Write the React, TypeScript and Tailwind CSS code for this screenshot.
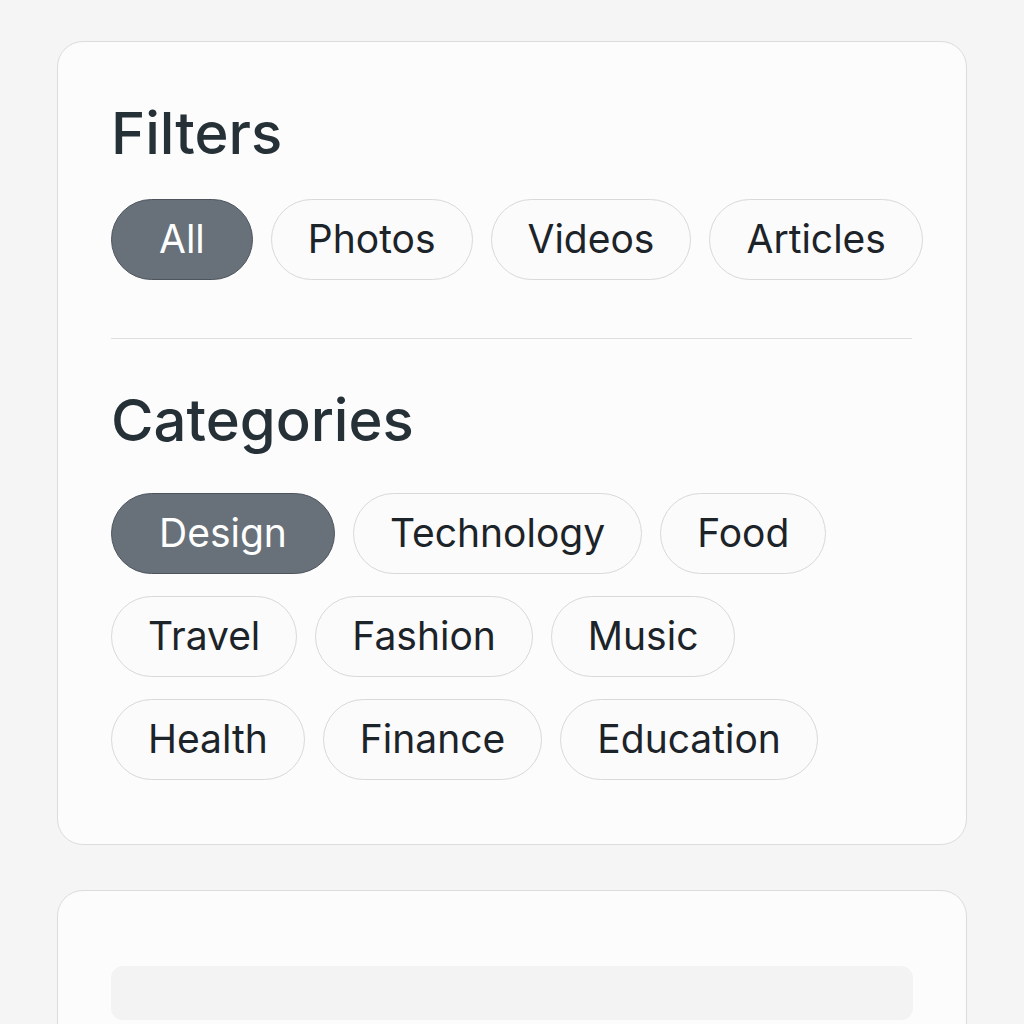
import React from 'react';

const filters = ['All', 'Photos', 'Videos', 'Articles'];
const categories = ['Design', 'Technology', 'Food', 'Travel', 'Fashion', 'Music', 'Health', 'Finance', 'Education'];

function Chip({ label, active }: { label: string; active?: boolean }) {
  return (
    <button
      className={
        active
          ? 'h-[81px] px-[47px] rounded-full flex items-center bg-[#68717a] border border-[#4d545c] text-white text-[39px]'
          : 'h-[81px] px-[36px] rounded-full flex items-center bg-[#fbfbfb] border border-[#d9d9d9] text-[#1c2329] text-[39px]'
      }
    >
      {label}
    </button>
  );
}

export default function App() {
  return (
    <div className="min-h-screen bg-[#f5f5f5] px-[57px] pt-[41px] font-['Inter',sans-serif]">
      <div className="bg-[#fcfcfc] border border-[#dcdcdc] rounded-[26px] px-[53px] pt-[56px] pb-[64px]">
        <h2 className="text-[58px] leading-[70px] font-medium text-[#263037]">Filters</h2>
        <div className="flex gap-[18px] mt-[31px]">
          {filters.map((f, i) => (
            <Chip key={f} label={f} active={i === 0} />
          ))}
        </div>
        <div className="h-px bg-[#dedede] mt-[58px] mr-[1px]" />
        <h2 className="text-[58px] leading-[70px] font-medium text-[#263037] mt-[46px]">Categories</h2>
        <div className="flex flex-wrap gap-x-[18px] gap-y-[22px] mt-[38px]">
          {categories.map((c, i) => (
            <Chip key={c} label={c} active={i === 0} />
          ))}
        </div>
      </div>
      <div className="mt-[45px] bg-[#fcfcfc] border border-[#dcdcdc] rounded-[26px] px-[53px] pt-[75px] pb-[40px]">
        <div className="h-[54px] rounded-[12px] bg-[#f3f3f3]" />
      </div>
    </div>
  );
}
